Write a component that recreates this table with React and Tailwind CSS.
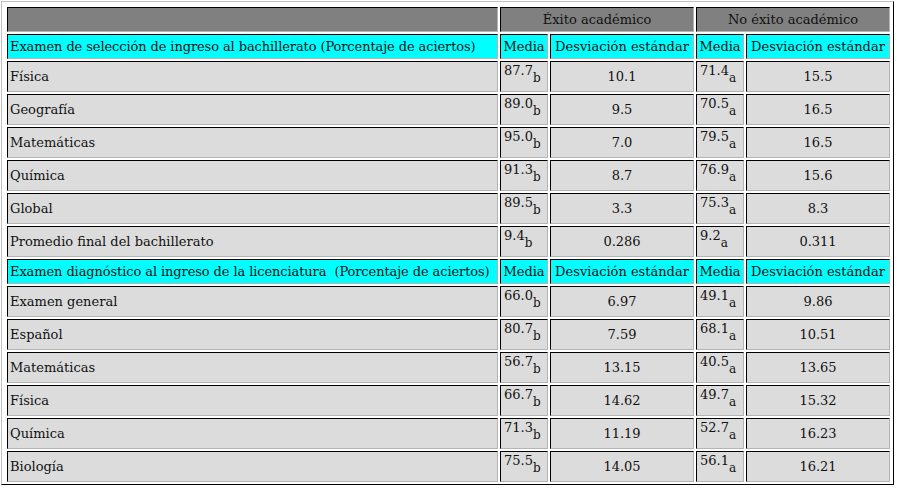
import React from "react";

const section1 = [
  ["Física", "87.7", "b", "10.1", "71.4", "a", "15.5"],
  ["Geografía", "89.0", "b", "9.5", "70.5", "a", "16.5"],
  ["Matemáticas", "95.0", "b", "7.0", "79.5", "a", "16.5"],
  ["Química", "91.3", "b", "8.7", "76.9", "a", "15.6"],
  ["Global", "89.5", "b", "3.3", "75.3", "a", "8.3"],
  ["Promedio final del bachillerato", "9.4", "b", "0.286", "9.2", "a", "0.311"],
];

const section2 = [
  ["Examen general", "66.0", "b", "6.97", "49.1", "a", "9.86"],
  ["Español", "80.7", "b", "7.59", "68.1", "a", "10.51"],
  ["Matemáticas", "56.7", "b", "13.15", "40.5", "a", "13.65"],
  ["Física", "66.7", "b", "14.62", "49.7", "a", "15.32"],
  ["Química", "71.3", "b", "11.19", "52.7", "a", "16.23"],
  ["Biología", "75.5", "b", "14.05", "56.1", "a", "16.21"],
];

const cell =
  "border border-t-black border-l-black border-r-[#b4b4b4] border-b-[#b4b4b4] p-0";

function SubHeader({ title }) {
  return (
    <tr>
      <td className={`${cell} h-[25px] bg-[#00ffff] pl-[2px] whitespace-nowrap tracking-[-0.1px]`}>{title}</td>
      <td className={`${cell} bg-[#00ffff] text-center`}>Media</td>
      <td className={`${cell} bg-[#00ffff] text-center whitespace-nowrap`}>Desviación estándar</td>
      <td className={`${cell} bg-[#00ffff] text-center`}>Media</td>
      <td className={`${cell} bg-[#00ffff] text-center whitespace-nowrap`}>Desviación estándar</td>
    </tr>
  );
}

function DataRow({ row }) {
  const [name, m1, s1, d1, m2, s2, d2] = row;
  return (
    <tr>
      <td className={`${cell} h-[31px] bg-[#dcdcdc] pl-[2px] align-middle`}>{name}</td>
      <td className={`${cell} bg-[#dcdcdc] align-top pl-[3px] pt-[2px] leading-[14px]`}>
        {m1}
        <span className="inline-block align-[-7px] text-[12px] leading-[12px]">{s1}</span>
      </td>
      <td className={`${cell} bg-[#dcdcdc] text-center align-middle`}>{d1}</td>
      <td className={`${cell} bg-[#dcdcdc] align-top pl-[3px] pt-[2px] leading-[14px]`}>
        {m2}
        <span className="inline-block align-[-7px] text-[12px] leading-[12px]">{s2}</span>
      </td>
      <td className={`${cell} bg-[#dcdcdc] text-center align-middle`}>{d2}</td>
    </tr>
  );
}

export default function App() {
  return (
    <div className="w-[897px] h-[489px] bg-white pt-[1px] pl-[1px] font-['DejaVu_Serif',serif] text-[13px] text-[#111]">
      <div className="w-[893px] border border-t-[#c0c0c0] border-l-[#c0c0c0] border-r-black border-b-black pl-[3px] pt-[3px] pr-[1px]">
        <table className="border-separate border-spacing-[2px] table-fixed w-[887px]">
          <colgroup>
            <col className="w-[491px]" />
            <col className="w-[48px]" />
            <col className="w-[144px]" />
            <col className="w-[48px]" />
            <col className="w-[144px]" />
          </colgroup>
          <tbody>
            <tr>
              <td className={`${cell} h-[25px] bg-[#808080]`}></td>
              <td colSpan={2} className={`${cell} bg-[#808080] text-center`}>
                Éxito académico
              </td>
              <td colSpan={2} className={`${cell} bg-[#808080] text-center`}>
                No éxito académico
              </td>
            </tr>
            <SubHeader title="Examen de selección de ingreso al bachillerato (Porcentaje de aciertos)" />
            {section1.map((r, i) => (
              <DataRow key={"a" + i} row={r} />
            ))}
            <SubHeader title={"Examen diagnóstico al ingreso de la licenciatura \u00a0(Porcentaje de aciertos)"} />
            {section2.map((r, i) => (
              <DataRow key={"b" + i} row={r} />
            ))}
          </tbody>
        </table>
      </div>
    </div>
  );
}
